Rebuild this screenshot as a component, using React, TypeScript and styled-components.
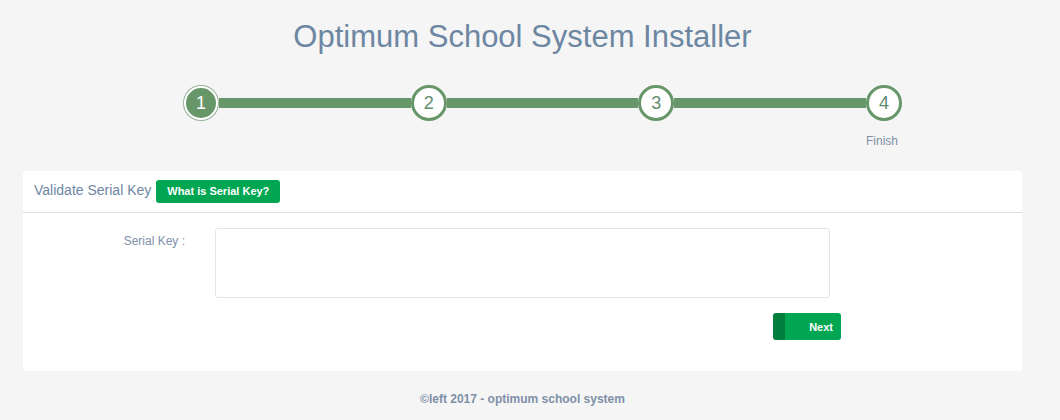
import React from "react";
import styled, { createGlobalStyle } from "styled-components";

const GlobalStyle = createGlobalStyle`
  html, body {
    margin: 0;
    padding: 0;
    background: #f5f5f5;
    font-family: "Liberation Sans", Arial, sans-serif;
  }
  * { box-sizing: border-box; }
`;

const Page = styled.div`
  width: 999px;
  margin-left: 23px;
  padding-top: 19px;
  display: flex;
  flex-direction: column;
`;

const Title = styled.h1`
  margin: 0;
  font-size: 31px;
  line-height: 36px;
  font-weight: 400;
  color: #6d87a3;
  text-align: center;
`;

const Stepper = styled.div`
  display: flex;
  align-items: flex-start;
  width: 719px;
  margin: 30px 0 0 160px;
`;

const Step = styled.div`
  display: flex;
  flex-direction: column;
  align-items: center;
  width: 36px;
  flex: 0 0 36px;
`;

const Circle = styled.div<{ $active?: boolean }>`
  width: ${(p) => (p.$active ? "34px" : "36px")};
  height: ${(p) => (p.$active ? "34px" : "36px")};
  margin-top: ${(p) => (p.$active ? "1px" : "0")};
  border-radius: 50%;
  display: flex;
  align-items: center;
  justify-content: center;
  font-size: 18px;
  background: ${(p) => (p.$active ? "#679669" : "#ffffff")};
  border: ${(p) => (p.$active ? "2px solid #ffffff" : "3px solid #679669")};
  box-shadow: ${(p) => (p.$active ? "0 0 0 1px #94b295" : "none")};
  color: ${(p) => (p.$active ? "#ffffff" : "#5f8c70")};
`;

const StepLabel = styled.div`
  margin-top: 13px;
  margin-right: 4px;
  white-space: nowrap;
  font-size: 12px;
  line-height: 14px;
  color: #7e90a8;
`;

const Connector = styled.div`
  flex: 1;
  height: 10px;
  margin-top: 13px;
  background: #679669;
`;

const Panel = styled.section`
  margin-top: 23px;
  background: #ffffff;
  border-radius: 3px;
  padding-bottom: 31px;
`;

const PanelHeader = styled.div`
  display: flex;
  align-items: center;
  height: 42px;
  padding: 0 11px 1px;
  border-bottom: 1px solid #dddddd;
`;

const PanelTitle = styled.span`
  font-size: 14px;
  line-height: 16px;
  color: #6d87a3;
  margin-top: -2px;
`;

const InfoButton = styled.button`
  margin-left: 5px;
  height: 23px;
  padding: 0 11px;
  border: none;
  border-radius: 3px;
  background: #00a651;
  color: #ffffff;
  font-family: inherit;
  font-size: 11px;
  font-weight: 700;
  cursor: pointer;
`;

const FieldRow = styled.div`
  display: grid;
  grid-template-columns: 162px 615px;
  column-gap: 30px;
  margin-top: 15px;
`;

const FieldLabel = styled.label`
  text-align: right;
  font-size: 12px;
  line-height: 14px;
  margin-top: 6px;
  color: #7e90a8;
`;

const TextArea = styled.textarea`
  height: 70px;
  width: 615px;
  border: 1px solid #e5e5e5;
  border-radius: 3px;
  resize: none;
  outline: none;
  font-family: inherit;
  font-size: 12px;
  background: #ffffff;
`;

const ActionRow = styled.div`
  display: flex;
  justify-content: flex-end;
  width: 818px;
  margin-top: 15px;
`;

const NextButton = styled.button`
  width: 68px;
  height: 27px;
  padding: 0 8px 0 0;
  text-align: right;
  border: none;
  border-left: 12px solid #007e3e;
  border-radius: 3px;
  background: #00a651;
  color: #ffffff;
  font-family: inherit;
  font-size: 11px;
  font-weight: 700;
  cursor: pointer;
`;

const Footer = styled.footer`
  margin-top: 21px;
  text-align: center;
  font-size: 12px;
  line-height: 14px;
  font-weight: 700;
  color: #7e90a8;
`;

const steps = [
  { n: 1, label: "" },
  { n: 2, label: "" },
  { n: 3, label: "" },
  { n: 4, label: "Finish" },
];

export default function App() {
  return (
    <>
      <GlobalStyle />
      <Page>
        <Title>Optimum School System Installer</Title>
        <Stepper>
          {steps.map((s, i) => (
            <React.Fragment key={s.n}>
              {i > 0 && <Connector />}
              <Step>
                <Circle $active={s.n === 1}>{s.n}</Circle>
                {s.label && <StepLabel>{s.label}</StepLabel>}
              </Step>
            </React.Fragment>
          ))}
        </Stepper>
        <Panel>
          <PanelHeader>
            <PanelTitle>Validate Serial Key</PanelTitle>
            <InfoButton>What is Serial Key?</InfoButton>
          </PanelHeader>
          <FieldRow>
            <FieldLabel htmlFor="serial">Serial Key :</FieldLabel>
            <TextArea id="serial" />
          </FieldRow>
          <ActionRow>
            <NextButton>Next</NextButton>
          </ActionRow>
        </Panel>
        <Footer>©left 2017 - optimum school system</Footer>
      </Page>
    </>
  );
}
